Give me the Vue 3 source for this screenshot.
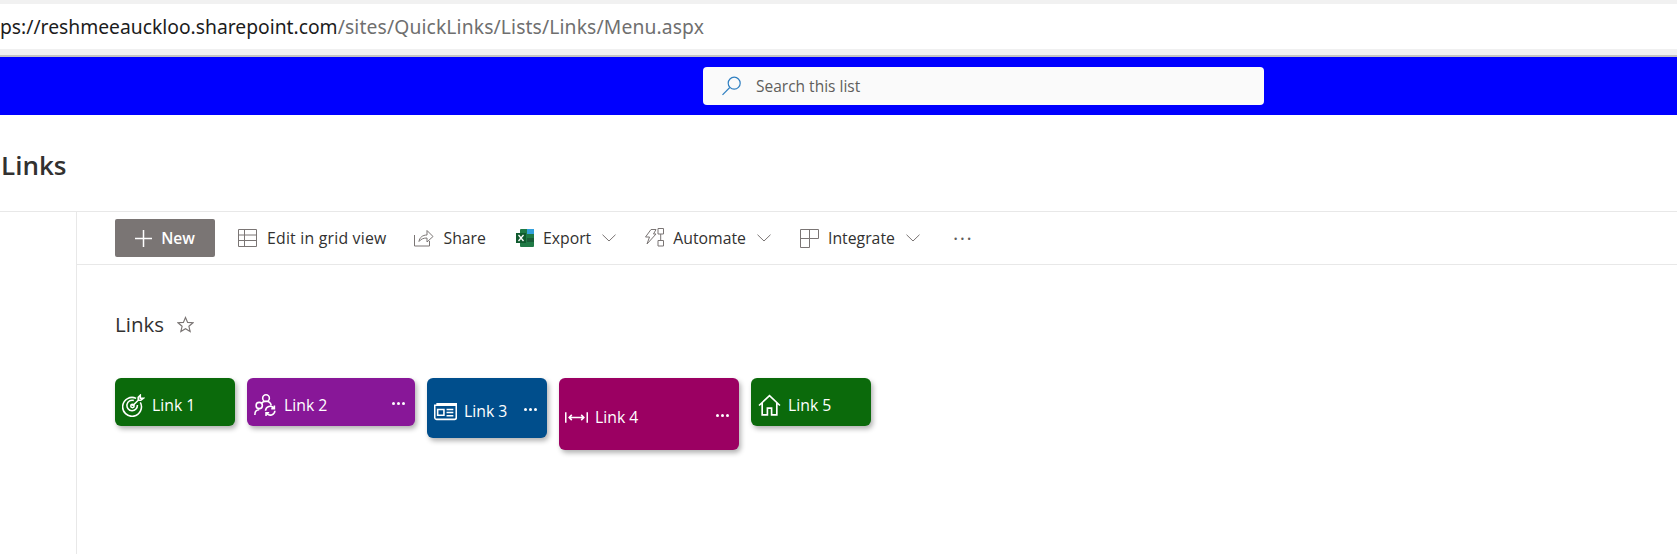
<template>
  <div class="page">
    <div class="address-bar">
      <span class="url"><span class="host">ps://reshmeeauckloo.sharepoint.com</span><span class="path">/sites/QuickLinks/Lists/Links/Menu.aspx</span></span>
    </div>

    <div class="suite-bar">
      <div class="search">
        <svg class="search-icon" width="22" height="22" viewBox="0 0 22 22" fill="none" stroke="#2f7fc1" stroke-width="1.2">
          <circle cx="13.2" cy="8.2" r="6" />
          <path d="M8.8 12.5 1.5 19.8" />
        </svg>
        <span>Search this list</span>
      </div>
    </div>

    <div class="site-header">Links</div>

    <div class="body">
      <div class="left-nav"></div>
      <div class="content">
        <div class="toolbar">
          <button class="new-btn">
            <svg width="17" height="17" viewBox="0 0 17 17" stroke="#fff" stroke-width="1.5"><path d="M8.5 0v17M0 8.5h17" /></svg>
            <span>New</span>
          </button>

          <div class="cmd cmd-grid">
            <svg width="20" height="20" viewBox="0 0 20 20" fill="none" stroke="#7a7574"><path d="M.5 1.5h18v17H.5zM.5 7h18M.5 12.5h18M6.5 1.5v17" /></svg>
            <span>Edit in grid view</span>
          </div>

          <div class="cmd cmd-share">
            <svg width="20" height="20" viewBox="0 0 20 20" fill="none" stroke="#7a7574"><path d="M.5 7v11h15v-5M5 13.5c.5-4 3.500-6.500 8-6.500V2.500l6 6-6 5.500V10c-3.500 0-6 1-8 3.500z" /></svg>
            <span>Share</span>
          </div>

          <div class="cmd cmd-export">
            <svg width="18" height="18" viewBox="0 0 18 18">
              <rect x="4" y="0" width="14" height="18" rx="1" fill="#1f7a45" />
              <rect x="11" y="0" width="7" height="5" fill="#33a0dc" />
              <rect x="11" y="9" width="7" height="4" fill="#185c37" />
              <rect x="0" y="4" width="10" height="10" fill="#0f5a2e" />
              <path d="M2.500 6 7.500 12M7.500 6l-5 6" stroke="#fff" stroke-width="1.300" />
            </svg>
            <span>Export</span>
            <svg class="chevron" width="14" height="8" viewBox="0 0 14 8" fill="none" stroke="#7a7574"><path d="M.5.700 7 7l6.500-6.300" /></svg>
          </div>

          <div class="cmd cmd-automate">
            <svg width="20" height="20" viewBox="0 0 20 20" fill="none" stroke="#7a7574"><path d="M7 1.500h5L9.500 6H12L3 16l2.500-7H1.500zM14 .5h5.500V6H14zM14 12.500h5.500V18H14zM16.700 6v6.500" /></svg>
            <span>Automate</span>
            <svg class="chevron" width="14" height="8" viewBox="0 0 14 8" fill="none" stroke="#7a7574"><path d="M.5.700 7 7l6.500-6.300" /></svg>
          </div>

          <div class="cmd cmd-integrate">
            <svg width="19" height="19" viewBox="0 0 19 19" fill="none" stroke="#7a7574"><path d="M.5.500h18v9h-9v9h-9zM9.500.500v9h-9" /></svg>
            <span>Integrate</span>
            <svg class="chevron" width="14" height="8" viewBox="0 0 14 8" fill="none" stroke="#7a7574"><path d="M.5.700 7 7l6.500-6.300" /></svg>
          </div>

          <div class="more">···</div>
        </div>

        <div class="list-title">
          <span>Links</span>
          <svg width="17" height="17" viewBox="0 0 24 24" fill="none" stroke="#7a7574" stroke-width="1.600"><path d="M12 2l3 7 7.500.6-5.700 4.900 1.800 7.400L12 18l-6.600 3.900 1.800-7.400L1.500 9.600 9 9z" /></svg>
        </div>

        <div class="tiles">
          <div v-for="tile in tiles" :key="tile.name" class="tile" :class="tile.cls">
            <svg class="tile-icon" width="23" height="23" viewBox="0 0 22 22" fill="none" stroke="#fff" stroke-width="1.500" v-html="tile.icon"></svg>
            <span class="tile-name">{{ tile.name }}</span>
            <span v-if="tile.more" class="tile-more"><i></i><i></i><i></i></span>
          </div>
        </div>
      </div>
    </div>
  </div>
</template>

<script setup>
const tiles = [
  {
    name: "Link 1",
    cls: "tile-1",
    more: false,
    icon: '<path d="M17.500 8a9 9 0 1 1-4-3.800M14.700 10.500a5 5 0 1 1-3.400-4.300"/><circle cx="10" cy="11.500" r="1.600"/><path d="M10 11.500l6-6M15.500 6V3.200l2-2V4h3l-2.500 2z"/>',
  },
  {
    name: "Link 2",
    cls: "tile-2",
    more: true,
    icon: '<circle cx="11.500" cy="4" r="3.200"/><circle cx="5" cy="11" r="3"/><path d="M.8 20c0-3 1.700-5 4.200-5M7 9c1-1.300 2.800-2 4.500-2 2.500 0 4.500 1.500 5 4"/><path d="M11 16a4.500 4.500 0 0 1 8-2.500M20 16a4.500 4.500 0 0 1-8 2.500M19.500 11v3h-3M11.500 21v-3h3"/>',
  },
  {
    name: "Link 3",
    cls: "tile-3",
    more: true,
    icon: '<path d="M.7 5h20.600v12a1.500 1.500 0 0 1-1.500 1.500H2.500A1.800 1.800 0 0 1 .7 17zM3 5V3.500h18.300V5"/><path d="M3.500 9h6v5.500h-6zM12 9h6.500M12 12h6.500M12 15h6.500"/>',
  },
  {
    name: "Link 4",
    cls: "tile-4",
    more: true,
    icon: '<path d="M.7 6v10M21.300 6v10M3.500 11h15M6.500 8.500 4 11l2.500 2.500M15.500 8.500 18 11l-2.500 2.500"/>',
  },
  {
    name: "Link 5",
    cls: "tile-5",
    more: false,
    icon: '<path d="M1 11 11 1.500 21 11M4 8.500V20h5v-6.500h4V20h5V8.500" stroke-width="1.600"/>',
  },
];
</script>

<style>
html,
body {
  margin: 0;
  background: #fff;
  overflow: hidden;
}
</style>

<style scoped>
.page {
  width: 1677px;
  height: 554px;
  overflow: hidden;
  font-family: "Open Sans", "Noto Sans", sans-serif;
  color: #323130;
}

.address-bar {
  box-sizing: border-box;
  height: 57px;
  padding: 5px 0 7px;
  background: #fff;
  border-top: 4px solid #f1f1f1;
  border-bottom: 2px solid #c4c4c4;
  box-shadow: inset 0 -6px 0 #f0f0f0;
  font-family: "Noto Sans", sans-serif;
  font-size: 19.300px;
  line-height: 36px;
  white-space: nowrap;
  overflow: hidden;
}

.url {
  display: block;
}

.host {
  color: #1c1c1c;
}

.path {
  color: #6f6f6f;
  letter-spacing: 0.130px;
}

.suite-bar {
  height: 58px;
  background: #0000ff;
  display: flex;
  align-items: center;
  padding-left: 703px;
}

.search {
  width: 561px;
  height: 38px;
  background: #fafafa;
  border-radius: 4px;
  display: flex;
  align-items: center;
  gap: 13px;
  padding-left: 18px;
  box-sizing: border-box;
  font-size: 15.500px;
  color: #605e5c;
}

.site-header {
  height: 97px;
  box-sizing: border-box;
  padding: 32px 0 0 1px;
  font-size: 26px;
  font-weight: 600;
  line-height: 36px;
  border-bottom: 1px solid #e8e8e8;
}

.body {
  display: flex;
  height: 342px;
}

.left-nav {
  width: 76px;
  border-right: 1px solid #e8e8e8;
}

.content {
  flex: 1;
}

.toolbar {
  height: 53px;
  box-sizing: border-box;
  border-bottom: 1px solid #e8e8e8;
  display: flex;
  align-items: center;
  padding-left: 38px;
  font-size: 15.800px;
}

.new-btn {
  width: 100px;
  height: 38px;
  margin-right: 23px;
  border: 0;
  border-radius: 2px;
  background: #7a7574;
  color: #fff;
  font: 600 15.500px "Open Sans", sans-serif;
  display: flex;
  align-items: center;
  justify-content: center;
  gap: 9px;
}

.cmd {
  display: flex;
  align-items: center;
  gap: 9px;
  white-space: nowrap;
}

.cmd-grid {
  margin-right: 28px;
  letter-spacing: 0.220px;
}

.cmd-share {
  margin-right: 30px;
}

.cmd-export {
  margin-right: 28px;
}

.cmd-automate {
  margin-right: 29px;
}

.cmd-integrate {
  margin-right: 33px;
}

.chevron {
  margin-left: 2px;
}

.more {
  font-size: 20px;
  letter-spacing: 1.500px;
  color: #605e5c;
}

.list-title {
  display: flex;
  align-items: center;
  gap: 13px;
  padding: 46px 0 0 38px;
  font-size: 20.500px;
  font-weight: 500;
  line-height: 26px;
}

.tiles {
  display: flex;
  align-items: flex-start;
  gap: 12px;
  padding: 41px 0 0 38px;
}

.tile {
  box-sizing: border-box;
  width: 120px;
  height: 48px;
  border-radius: 6px;
  display: flex;
  align-items: center;
  padding: 6px 8px 0 7px;
  color: #fff;
  font-size: 15.800px;
  box-shadow: 2px 3px 5px rgba(0, 0, 0, 0.3);
}

.tile-icon {
  flex: none;
  margin-right: 7px;
}

.tile-name {
  flex: 1;
}

.tile-more {
  display: flex;
  gap: 2px;
  margin: 0 2px 4px 0;
}

.tile-more i {
  width: 3px;
  height: 3px;
  background: #fff;
  border-radius: 50%;
}

.tile-1,
.tile-5 {
  background: #0b6a0b;
}

.tile-2 {
  width: 168px;
  background: #881798;
}

.tile-3 {
  height: 60px;
  background: #004e8c;
}

.tile-4 {
  width: 180px;
  height: 72px;
  padding-left: 6px;
  background: #9b0062;
}
</style>
